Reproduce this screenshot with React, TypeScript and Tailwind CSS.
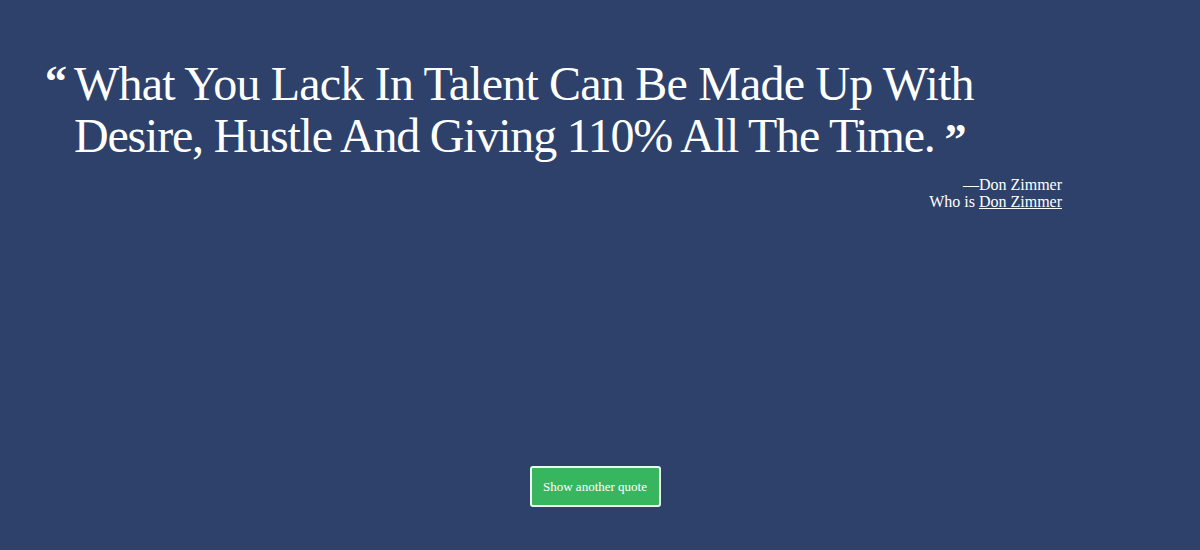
export default function App() {
  return (
    <main className="flex h-[550px] w-full flex-col bg-[#2d416b] text-white [font-family:'Liberation_Serif','DejaVu_Serif',serif]">
      <section className="ml-[45px] mt-[58px] w-[1017px]">
        <blockquote className="flex items-start">
          <span className="mr-[7px] mt-[2px] text-[44px] leading-[44px] font-bold">“</span>
          <p className="text-[48px] leading-[52px] tracking-[-0.8px]">
            What You Lack In Talent Can Be Made Up With
            <br />
            <span className="tracking-[-1.2px]">Desire, Hustle And Giving 110% All The Time.</span>
            <span className="ml-[10px] align-[-2px] text-[44px] font-bold leading-none">”</span>
          </p>
        </blockquote>
        <div className="mt-[14px] text-right text-[16px] leading-[17px]">
          <div>—Don Zimmer</div>
          <div>
            Who is{" "}
            <a href="#" className="underline">
              Don Zimmer
            </a>
          </div>
        </div>
      </section>

      <div className="mt-auto mb-[43px] flex justify-center pr-[10px]">
        <button className="h-[41px] w-[131px] rounded-[3px] border-2 border-white/90 bg-[#38b65f] text-[13px] font-medium text-white">
          Show another quote
        </button>
      </div>
    </main>
  );
}
